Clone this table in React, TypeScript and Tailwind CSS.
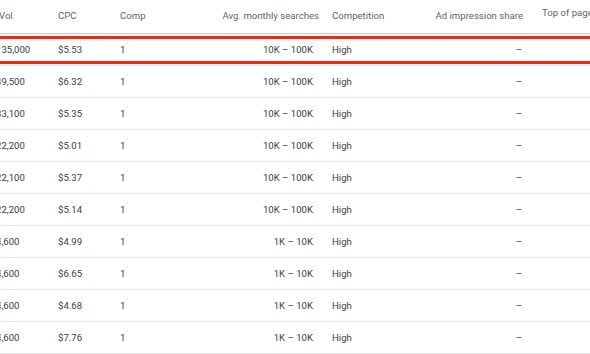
import React from "react";

interface Row {
  vol: string;
  cpc: string;
  range: string;
}

const rows: Row[] = [
  { vol: "135,000", cpc: "$5.53", range: "10K – 100K" },
  { vol: "49,500", cpc: "$6.32", range: "10K – 100K" },
  { vol: "33,100", cpc: "$5.35", range: "10K – 100K" },
  { vol: "22,200", cpc: "$5.01", range: "10K – 100K" },
  { vol: "22,100", cpc: "$5.37", range: "10K – 100K" },
  { vol: "22,200", cpc: "$5.14", range: "10K – 100K" },
  { vol: "4,600", cpc: "$4.99", range: "1K – 10K" },
  { vol: "4,600", cpc: "$6.65", range: "1K – 10K" },
  { vol: "4,600", cpc: "$4.68", range: "1K – 10K" },
  { vol: "4,600", cpc: "$7.76", range: "1K – 10K" },
];

const App: React.FC = () => {
  return (
    <div
      className="relative w-[590px] h-[354px] overflow-hidden bg-white text-[9.6px]"
      style={{ fontFamily: "Roboto, 'Liberation Sans', sans-serif" }}
    >
      <div className="ml-[-4px] w-[640px]">
        {/* header */}
        <div className="flex h-[34px] items-center border-b border-[#c4c4c4] text-[#5f6368]">
          <div className="w-[62px] pl-[3px]">Vol</div>
          <div className="w-[62px]">CPC</div>
          <div className="w-[80px]">Comp</div>
          <div className="w-[119px] text-right">Avg. monthly searches</div>
          <div className="w-[13px]" />
          <div className="w-[68px]">Competition</div>
          <div className="w-[123px] text-right">Ad impression share</div>
          <div className="w-[19px]" />
          <div className="w-[80px] self-start pt-[6px] whitespace-nowrap">Top of page</div>
        </div>

        {/* rows */}
        {rows.map((r, i) => (
          <div
            key={i}
            className="flex h-[32px] items-center border-b border-[#e6e6e6] text-[#3c4043]"
          >
            <div className="w-[62px] pt-[2px]">{r.vol}</div>
            <div className="w-[62px] pt-[2px]">{r.cpc}</div>
            <div className="w-[80px] pt-[2px]">1</div>
            <div className="w-[119px] pr-[6px] pt-[2px] text-right">{r.range}</div>
            <div className="w-[13px]" />
            <div className="w-[68px] pt-[2px]">High</div>
            <div className="w-[123px] pr-[1px] pt-[2px] text-right">–</div>
            <div className="w-[19px]" />
            <div className="w-[80px]" />
          </div>
        ))}
      </div>

      {/* red highlight around first row */}
      <div className="absolute left-[-10px] right-[-10px] top-[36px] h-[28px] border-[3px] border-[#f5260c]" />
    </div>
  );
};

export default App;
